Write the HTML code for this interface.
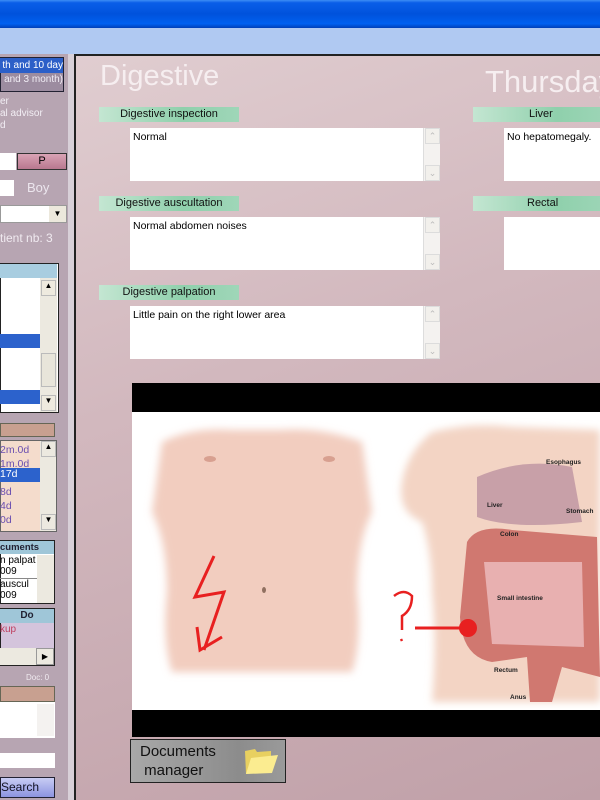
<!DOCTYPE html>
<html><head><style>
*{margin:0;padding:0;box-sizing:border-box}
body{width:600px;height:800px;overflow:hidden;position:relative;font-family:"Liberation Sans",sans-serif;background:#b7a5b2}
.a{position:absolute}
.lbl{position:absolute;height:15px;background:linear-gradient(90deg,#c4e6d2,#8fd0ac 60%,#9fd6b8);font-size:11px;color:#111;text-align:center;line-height:15px}
.box{position:absolute;background:#fff;font-size:10.5px;color:#000;padding:3px 3px}
.sb{position:absolute;right:0;top:0;bottom:0;width:17px;background:#f4f2f0;border-left:1px solid #ddd}
.sb i{position:absolute;left:1px;width:15px;height:16px;border:1px solid #dcdcdc;background:#f2f0ec;font-style:normal;color:#bbb;font-size:9px;text-align:center;line-height:14px}
.t{font-size:10.5px;color:#6a4fb0;position:absolute;left:0}
</style></head><body>
<div class="a" style="left:0;top:0;width:600px;height:28px;background:linear-gradient(#3d8ef5 0,#0a5ee8 10%,#0052dc 50%,#0060f0 85%,#003fb8 100%)"></div>
<div class="a" style="left:0;top:28px;width:600px;height:26px;background:#b0c9f2"></div>

<div class="a" style="left:0;top:54px;width:68px;height:746px;background:#b7a5b2"></div>
<div class="a" style="left:0;top:57px;width:64px;height:35px;background:#9c8ca0;border:1px solid #223"></div>
<div class="a" style="left:0;top:58px;width:63px;height:15px;background:#2c5fc8;color:#fff;font-size:10px;line-height:15px;white-space:nowrap;direction:rtl;overflow:hidden">th and 10 day</div>
<div class="a" style="left:0;top:74px;width:63px;color:#f0ecf4;font-size:10px;text-align:right;white-space:nowrap">and 3 month)</div>
<div class="a" style="left:0;top:96px;color:#f2eef4;font-size:10px;line-height:12px">er<br>al advisor<br>d</div>
<div class="a" style="left:0;top:153px;width:16px;height:17px;background:#fff"></div>
<div class="a" style="left:17px;top:153px;width:50px;height:17px;background:linear-gradient(#d9a3b5,#b9788f);border:1px solid #333;font-size:11px;text-align:center;line-height:15px">P</div>
<div class="a" style="left:0;top:180px;width:14px;height:16px;background:#fff"></div>
<div class="a" style="left:27px;top:180px;color:#ece6ee;font-size:13px">Boy</div>
<div class="a" style="left:0;top:205px;width:67px;height:18px;background:#fff;border:1px solid #999"></div>
<div class="a" style="left:49px;top:206px;width:17px;height:16px;background:#ece8dc;font-size:8px;text-align:center;line-height:16px">▼</div>
<div class="a" style="left:0;top:231px;color:#f0eaf0;font-size:12px">tient nb: 3</div>
<div class="a" style="left:0;top:263px;width:59px;height:150px;border:1px solid #222;background:#fff"></div>
<div class="a" style="left:0;top:264px;width:57px;height:14px;background:#a8cde0"></div>
<div class="a" style="left:0;top:334px;width:40px;height:14px;background:#2c62cc"></div>
<div class="a" style="left:0;top:390px;width:40px;height:14px;background:#2c62cc"></div>
<div class="a" style="left:40px;top:278px;width:17px;height:134px;background:#ece9e0"></div>
<div class="a" style="left:41px;top:280px;width:15px;height:16px;background:#eeeadf;border:1px solid #bbb;font-size:8px;text-align:center">▲</div>
<div class="a" style="left:41px;top:353px;width:15px;height:34px;background:#e8e5da;border:1px solid #bbb"></div>
<div class="a" style="left:41px;top:395px;width:15px;height:16px;background:#eeeadf;border:1px solid #bbb;font-size:8px;text-align:center">▼</div>

<div class="a" style="left:0;top:423px;width:55px;height:14px;background:#c8a090;border:1px solid #665"></div>
<div class="a" style="left:0;top:440px;width:57px;height:92px;background:#f4dccc;border:1px solid #666"></div>
<div class="t" style="top:444px">2m.0d</div><div class="t" style="top:458px">1m.0d</div>
<div class="a" style="left:0;top:468px;width:40px;height:14px;background:#2c62cc;color:#fff;font-size:10.5px">17d</div>
<div class="t" style="top:486px">8d</div><div class="t" style="top:500px">4d</div><div class="t" style="top:514px">0d</div>
<div class="a" style="left:40px;top:441px;width:16px;height:90px;background:#ece9e0"></div>
<div class="a" style="left:41px;top:441px;width:15px;height:16px;border:1px solid #bbb;font-size:8px;text-align:center">▲</div>
<div class="a" style="left:41px;top:514px;width:15px;height:16px;border:1px solid #bbb;font-size:8px;text-align:center">▼</div>

<div class="a" style="left:0;top:540px;width:55px;height:64px;border:1px solid #222;background:#fff"></div>
<div class="a" style="left:0;top:541px;width:54px;height:13px;background:#9fc6d8;font-size:9.5px;line-height:13px;font-weight:bold;color:#223">cuments</div>
<div class="a" style="left:0;top:555px;font-size:10px;line-height:11px">n palpat<br>009</div>
<div class="a" style="left:0;top:578px;width:37px;height:1px;background:#888"></div>
<div class="a" style="left:0;top:579px;font-size:10px;line-height:11px">auscul<br>009</div>
<div class="a" style="left:37px;top:555px;width:17px;height:48px;background:#ece9e0"></div>
<div class="a" style="left:0;top:608px;width:55px;height:58px;border:1px solid #222;background:#d4c4dc"></div>
<div class="a" style="left:0;top:609px;width:54px;height:14px;background:#9fc6d8;font-size:10px;line-height:14px;font-weight:bold;text-align:center;color:#223">Do</div>
<div class="a" style="left:0;top:624px;font-size:10px;color:#c04060">kup</div>
<div class="a" style="left:0;top:648px;width:54px;height:17px;background:#ece9e0"></div>
<div class="a" style="left:36px;top:648px;width:18px;height:17px;border:1px solid #999;font-size:8px;text-align:center;line-height:15px">▶</div>
<div class="a" style="left:26px;top:673px;color:#f0eaf0;font-size:8px">Doc: 0</div>
<div class="a" style="left:0;top:686px;width:55px;height:16px;background:#c8a090;border:1px solid #665"></div>
<div class="a" style="left:0;top:702px;width:55px;height:36px;background:#fff"></div>
<div class="a" style="left:37px;top:704px;width:17px;height:32px;background:#f4f2f0"></div>
<div class="a" style="left:0;top:753px;width:55px;height:15px;background:#fff"></div>
<div class="a" style="left:0;top:777px;width:55px;height:21px;background:linear-gradient(#c8ccf4,#8c94e0);border:1px solid #223;font-size:12px;line-height:19px;color:#112">Search</div>

<div class="a" style="left:68px;top:54px;width:8px;height:746px;background:#d8d0d8"></div>
<div class="a" style="left:74px;top:54px;width:2px;height:746px;background:#222"></div>

<div class="a" style="left:76px;top:54px;width:524px;height:746px;background:linear-gradient(160deg,#e0cdd0 0%,#d2b8be 40%,#c0a0a8 100%);border-top:2px solid #222"></div>
<div class="a" style="left:100px;top:60px;font-size:29px;color:#f6eef0">Digestive</div>
<div class="a" style="left:485px;top:64px;font-size:31px;color:#f6eef0;white-space:nowrap">Thursday</div>

<div class="lbl" style="left:99px;top:107px;width:140px">Digestive inspection</div>
<div class="box" style="left:130px;top:128px;width:310px;height:53px">Normal<div class="sb"><i style="top:0">⌃</i><i style="bottom:0">⌄</i></div></div>
<div class="lbl" style="left:99px;top:196px;width:140px">Digestive auscultation</div>
<div class="box" style="left:130px;top:217px;width:310px;height:53px">Normal abdomen noises<div class="sb"><i style="top:0">⌃</i><i style="bottom:0">⌄</i></div></div>
<div class="lbl" style="left:99px;top:285px;width:140px">Digestive palpation</div>
<div class="box" style="left:130px;top:306px;width:310px;height:53px">Little pain on the right lower area<div class="sb"><i style="top:0">⌃</i><i style="bottom:0">⌄</i></div></div>

<div class="lbl" style="left:473px;top:107px;width:140px;text-align:left;padding-left:56px">Liver</div>
<div class="box" style="left:504px;top:128px;width:100px;height:53px">No hepatomegaly.</div>
<div class="lbl" style="left:473px;top:196px;width:140px;text-align:left;padding-left:54px">Rectal</div>
<div class="box" style="left:504px;top:217px;width:100px;height:53px"></div>

<div class="a" style="left:132px;top:383px;width:468px;height:354px;background:#000"></div>
<div class="a" style="left:132px;top:412px;width:468px;height:298px;background:#fff"></div>
<svg class="a" style="left:132px;top:412px" width="468" height="298" viewBox="0 0 468 298">
<defs><filter id="bl"><feGaussianBlur stdDeviation="4"/></filter></defs>
<path d="M30 30 Q60 15 100 18 L150 18 Q190 15 230 30 L240 100 Q225 130 225 180 Q230 230 220 260 L40 260 Q30 230 35 180 Q35 130 20 100 Z" fill="#f2cdbf" filter="url(#bl)"/>
<ellipse cx="78" cy="47" rx="6" ry="3" fill="#d8a090"/><ellipse cx="197" cy="47" rx="6" ry="3" fill="#d8a090"/>
<ellipse cx="132" cy="178" rx="2" ry="3" fill="#907060"/>
<path d="M82 144 L63 185 L92 180 L72 238 M65 215 L68 238 L90 225" stroke="#e82020" stroke-width="3" fill="none"/>
<path d="M300 20 Q340 10 380 15 L468 18 L468 290 L300 290 Q305 230 300 180 Q300 140 290 110 Q265 100 270 70 Q275 40 300 20 Z" fill="#f3d4c4" filter="url(#bl)"/>
<path d="M345 65 Q390 45 440 55 L450 110 Q380 118 345 105 Z" fill="#c8a0a8"/>
<path d="M335 130 Q345 112 380 118 L465 125 L468 265 L430 255 L420 290 L398 290 L395 245 L360 250 Q330 245 328 205 Z" fill="#d07870"/>
<path d="M352 150 L450 150 L452 235 L360 232 Z" fill="#e8b0b0"/>
<path d="M262 184 Q272 176 280 184 Q280 198 270 204 L270 218 M269 227 L270 229" stroke="#e82020" stroke-width="2.5" fill="none"/>
<path d="M283 216 L330 216" stroke="#e82020" stroke-width="3"/>
<circle cx="336" cy="216" r="9" fill="#e82020"/>
<g font-size="6.5" font-weight="bold" fill="#222" font-family="Liberation Sans,sans-serif">
<text x="414" y="52">Esophagus</text><text x="355" y="95">Liver</text><text x="434" y="101">Stomach</text>
<text x="368" y="124">Colon</text><text x="365" y="188">Small intestine</text>
<text x="362" y="260">Rectum</text><text x="378" y="287">Anus</text></g>
</svg>

<div class="a" style="left:130px;top:739px;width:156px;height:44px;background:linear-gradient(90deg,#a8a8a8,#8c8c8c 70%,#9a9a9a);border:1px solid #222"></div>
<div class="a" style="left:140px;top:742px;font-size:15px;line-height:19px;color:#111">Documents<br>&nbsp;manager</div>
<svg class="a" style="left:243px;top:745px" width="36" height="32" viewBox="0 0 36 32"><path d="M2 6 L12 4 L14 7 L28 6 L28 26 L3 29 Z" fill="#e8d060"/><path d="M8 13 L35 10 L29 28 L3 29 Z" fill="#fbec90"/></svg>
</body></html>
